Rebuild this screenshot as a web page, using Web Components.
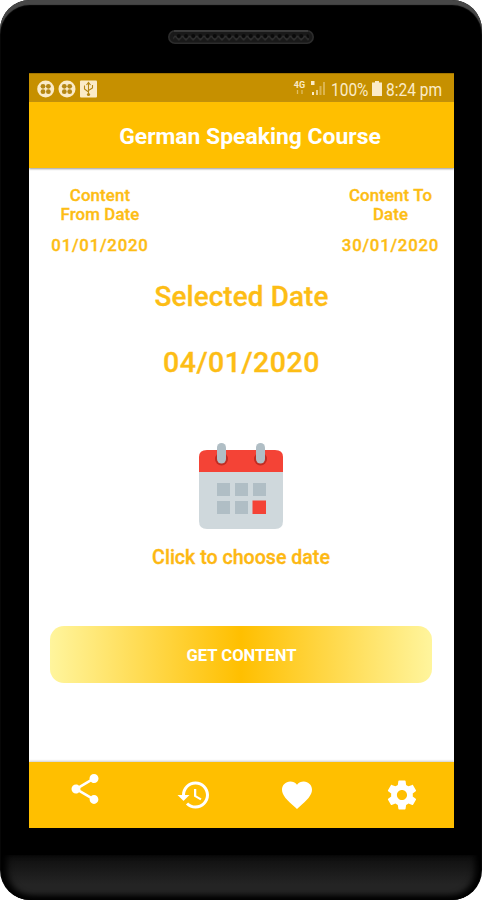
<!DOCTYPE html>
<html lang="en">
<head>
<meta charset="utf-8">
<title>German Speaking Course</title>
<style>
html, body { margin: 0; background: #fff; }
body { font-family: Roboto, "Liberation Sans", sans-serif; width: 482px; height: 900px; overflow: hidden; }
</style>
</head>
<body>
<phone-frame>
  <status-bar></status-bar>
  <app-bar>German Speaking Course</app-bar>
  <date-screen></date-screen>
  <bottom-nav></bottom-nav>
</phone-frame>
<script>
const define = (name, html) => customElements.define(name, class extends HTMLElement {
  constructor() {
    super();
    const t = document.createElement('template');
    t.innerHTML = html;
    this.attachShadow({ mode: 'open' }).append(t.content.cloneNode(true));
  }
});

define('phone-speaker', `
<style>
:host { display: block; width: 146px; height: 14px; }
svg { display: block; }
</style>
<svg width="146" height="14" viewBox="0 0 146 14">
  <defs><pattern id="mesh" width="7.2" height="9" patternUnits="userSpaceOnUse" y="3">
    <path d="M0 3 L3.6 7 L7.2 3" stroke="#303030" stroke-width="1.5" fill="none"/>
    <circle cx="3.6" cy="3" r="2" fill="#0a0a0a"/></pattern></defs>
  <rect x=".8" y=".8" width="144.400" height="12.400" rx="6.200" fill="#191919" stroke="#2c2c2c" stroke-width="1.600"/>
  <rect x="5" y="3" width="136" height="9" rx="4" fill="url(#mesh)"/>
  <path d="M6 1H140" stroke="#404040" stroke-width="1.400"/>
</svg>`);

define('phone-frame', `
<style>
:host { display: flex; flex-direction: column; align-items: center; box-sizing: border-box; width: 482px; height: 900px;
  border-radius: 30px; background: #000; overflow: hidden;
  box-shadow: inset 0 5px 1px #474747; }
phone-speaker { margin: 30px 0 29px; flex: none; }
.screen { width: 425px; height: 755px; flex: none; display: flex; flex-direction: column; background: #fff; overflow: hidden; }
.chin { width: 480px; height: 45px; margin-top: 27px; flex: none; border-radius: 0 0 29px 29px;
  background: linear-gradient(#0e0e0e, #242424 65%, #242424 80%, #161616); box-shadow: inset 6px -2px 6px #000, inset -6px -2px 6px #000; }
</style>
<phone-speaker></phone-speaker>
<div class="screen"><slot></slot></div>
<div class="chin"></div>`);

define('status-bar', `
<style>
:host { display: flex; align-items: center; box-sizing: border-box; height: 29px; padding: 3px 12px 0 8px; flex: none;
  background: #c69000; color: #fbebc8; font-size: 18px; border-top: 1px solid #a37600; }
svg { display: block; flex: none; }
.icons { margin-top: -2px; }
.gap { flex: 1; }
.t { display: block; white-space: nowrap; line-height: 24px; }
.p { width: 37px; margin-left: 5px; } .c { width: 56px; margin-left: 4px; }
.t span { display: inline-block; transform-origin: 0 50%; transform: scaleX(.86); }
.net { font-size: 9px; font-weight: 700; line-height: 8px; width: 12px; height: 17px; margin-right: 5px; text-align: center; }
.net svg { margin: 1px auto 0; }
</style>
<svg class="icons" width="60" height="18" viewBox="0 0 60 18">
  <g fill="#fbebc8"><circle cx="8.700" cy="9" r="8.500"/><circle cx="30" cy="9" r="8.500"/><rect x="43" y=".5" width="17" height="17" rx="1"/></g>
  <g fill="#b58714">
    <circle cx="6" cy="6.300" r="2.400"/><circle cx="11.400" cy="6.300" r="2.400"/><circle cx="6" cy="11.700" r="2.400"/><circle cx="11.400" cy="11.700" r="2.400"/>
    <circle cx="27.300" cy="6.300" r="2.400"/><circle cx="32.700" cy="6.300" r="2.400"/><circle cx="27.300" cy="11.700" r="2.400"/><circle cx="32.700" cy="11.700" r="2.400"/></g>
  <g fill="none" stroke="#b58714" stroke-width="1.100"><path d="M51.500 3V15M51.500 12L47.500 9V5.500M51.500 10.500L55.500 8V5M49.500 5L51.500 2.500L53.500 5"/></g>
  <circle cx="51.500" cy="14.500" r="1.600" fill="#b58714"/>
</svg>
<div class="gap"></div>
<div class="net">4G<svg width="8" height="5" viewBox="0 0 8 5"><path d="M1.500 0V4M6 0V4" stroke="#fbebc8" stroke-opacity=".5" stroke-width="1.300"/></svg></div>
<svg style="margin-top:-3px" width="15" height="16" viewBox="0 0 15 16"><g fill="#fbebc8"><path d="M0 1H3.500V5H0zM1 12H3V15H1z"/><path opacity=".7" d="M5 10H7V15H5z"/><path opacity=".4" d="M8.500 6H10.500V15H8.500zM12 2H14V15H12z"/></g></svg>
<div class="t p"><span>100%</span></div>
<svg style="margin-left:4px;margin-top:-2px" width="10" height="15" viewBox="0 0 10 15"><path fill="#fbebc8" d="M3 0H7V1.500H10V15H0V1.500H3z"/></svg>
<div class="t c"><span>8:24 pm</span></div>`);

define('app-bar', `
<style>
:host { display: flex; align-items: center; justify-content: center; height: 66px; flex: none; box-sizing: border-box; padding-left: 18px; padding-top: 2px;
  background: #ffbf00; color: #fff; font-size: 22.9px; font-weight: 700; white-space: nowrap;
  box-shadow: 0 1px 2px #999; position: relative; }
</style>
<slot></slot>`);

define('date-range', `
<style>
:host { display: block; width: 110px; text-align: center; font-size: 16.8px; line-height: 19px; letter-spacing: .15px; }
.v { margin-top: 12px; letter-spacing: .8px; }
</style>
<div><slot></slot></div><div class="v"><slot name="value"></slot></div>`);

define('calendar-icon', `
<style>:host { display: block; width: 86px; height: 88px; } svg { display: block; }</style>
<svg width="86" height="88" viewBox="0 0 86 88">
  <path fill="#cfd8dc" d="M1 27H85V79Q85 87 77 87H9Q1 87 1 79z"/>
  <path fill="#f44336" d="M1 30V15Q1 8 9 8H77Q85 8 85 15V30z"/>
  <g fill="#c02c22"><circle cx="23.500" cy="17" r="6.500"/><circle cx="62.500" cy="17" r="6.500"/></g>
  <g fill="#b0bec5"><rect x="19" y="1" width="9" height="20.500" rx="4.500"/><rect x="58" y="1" width="9" height="20.500" rx="4.500"/>
  <path d="M19 41H32V54H19zM37 41H50V54H37zM55 41H68V54H55zM19 59H32V72H19zM37 59H50V72H37z"/></g>
  <path fill="#f44336" d="M54.500 58.500H68V72H54.500z"/>
</svg>`);

define('gradient-button', `
<style>
:host { display: flex; width: 382px; height: 57px; border-radius: 14px; align-items: center; justify-content: center;
  background: linear-gradient(90deg, #fff59d, #ffbf00 50%, #fff59d); color: #fff; font-size: 16.6px; font-weight: 700;
  box-sizing: border-box; padding-left: 1px; padding-top: 1px; -webkit-text-stroke: 0; }
</style>
<slot></slot>`);

define('date-screen', `
<style>
:host { display: flex; flex-direction: column; align-items: center; flex: 1; color: #fdbd15; font-weight: 500; -webkit-text-stroke: .35px; }
.range { align-self: stretch; display: flex; justify-content: space-between; padding: 18px 8px 0 16.500px; }
.h { font-size: 27.800px; line-height: 34px; margin-top: 25px; letter-spacing: .15px; padding-left: 1px; }
.d { font-size: 28.500px; line-height: 34px; margin-top: 32px; letter-spacing: .5px; padding-left: 1px; }
calendar-icon { margin-top: 62px; }
.c { font-size: 19.600px; line-height: 24px; margin-top: 16px; color: #fdb813; }
gradient-button { margin-top: 56px; }
</style>
<div class="range">
  <date-range>Content<br>From Date<span slot="value">01/01/2020</span></date-range>
  <date-range>Content To<br>Date<span slot="value">30/01/2020</span></date-range>
</div>
<div class="h">Selected Date</div>
<div class="d">04/01/2020</div>
<calendar-icon></calendar-icon>
<div class="c">Click to choose date</div>
<gradient-button>GET CONTENT</gradient-button>`);

define('bottom-nav', `
<style>
:host { display: flex; justify-content: space-between; align-items: flex-start; box-sizing: border-box; height: 66px; flex: none;
  padding: 15px 34px 0 38.500px; background: #ffbf00; box-shadow: 0 -1px 2px #ccc; }
svg { display: block; width: 36px; height: 36px; fill: #fff; }
.share { margin-top: -6px; margin-right: 5px; }
.heart { margin-right: 1px; }
</style>
<svg class="share" viewBox="0 0 24 24"><path d="M18 16.080c-.76 0-1.440.3-1.960.77L8.910 12.700c.05-.23.09-.46.09-.7s-.04-.47-.09-.7l7.050-4.110c.54.5 1.250.81 2.040.81 1.660 0 3-1.340 3-3s-1.340-3-3-3-3 1.340-3 3c0 .24.04.47.09.7L8.040 9.810C7.500 9.310 6.790 9 6 9c-1.660 0-3 1.340-3 3s1.340 3 3 3c.79 0 1.500-.31 2.040-.81l7.120 4.160c-.05.21-.08.43-.08.65 0 1.610 1.310 2.920 2.920 2.920s2.920-1.310 2.920-2.920-1.310-2.920-2.920-2.920z"/></svg>
<svg viewBox="0 0 24 24"><path d="M13 3c-4.970 0-9 4.030-9 9H1l3.890 3.890.07.14L9 12H6c0-3.870 3.130-7 7-7s7 3.130 7 7-3.130 7-7 7c-1.930 0-3.680-.79-4.940-2.060l-1.420 1.420C8.270 19.990 10.510 21 13 21c4.970 0 9-4.030 9-9s-4.030-9-9-9zm-1 5v5l4.280 2.540.72-1.210-3.500-2.080V8H12z"/></svg>
<svg class="heart" viewBox="0 0 24 24"><path d="M12 21.350l-1.450-1.320C5.400 15.360 2 12.280 2 8.500 2 5.420 4.420 3 7.500 3c1.740 0 3.410.81 4.500 2.090C13.090 3.810 14.760 3 16.500 3 19.580 3 22 5.420 22 8.500c0 3.780-3.400 6.860-8.550 11.540L12 21.350z"/></svg>
<svg viewBox="0 0 24 24"><path transform="translate(.4 .4) scale(.965)" d="M19.430 12.980c.04-.32.07-.64.07-.98s-.03-.66-.07-.98l2.110-1.650c.19-.15.24-.42.12-.64l-2-3.460c-.12-.22-.39-.3-.61-.22l-2.490 1c-.52-.4-1.080-.73-1.690-.98l-.38-2.650C14.460 2.180 14.250 2 14 2h-4c-.25 0-.46.18-.49.42l-.38 2.650c-.61.25-1.170.59-1.690.98l-2.490-1c-.23-.09-.49 0-.61.22l-2 3.460c-.13.22-.07.49.12.64l2.110 1.650c-.04.32-.07.65-.07.98s.03.66.07.98l-2.110 1.650c-.19.15-.24.42-.12.64l2 3.460c.12.22.39.3.61.22l2.490-1c.52.4 1.080.73 1.690.98l.38 2.650c.03.24.24.42.49.42h4c.25 0 .46-.18.49-.42l.38-2.650c.61-.25 1.170-.59 1.690-.98l2.490 1c.23.09.49 0 .61-.22l2-3.460c.12-.22.07-.49-.12-.64l-2.110-1.650zM12 15.500c-1.930 0-3.500-1.570-3.500-3.500s1.570-3.500 3.500-3.500 3.500 1.570 3.500 3.500-1.570 3.500-3.500 3.500z"/></svg>`);
</script>
</body>
</html>
